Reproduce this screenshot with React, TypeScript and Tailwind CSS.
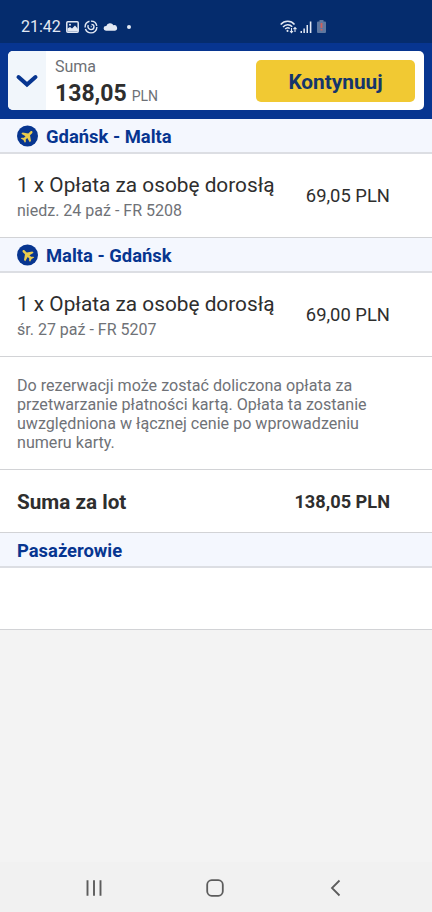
import type { ReactNode } from 'react';

const flights = [
  { route: 'Gdańsk - Malta', details: 'niedz. 24 paź - FR 5208', price: '69,05', back: false },
  { route: 'Malta - Gdańsk', details: 'śr. 27 paź - FR 5207', price: '69,00', back: true },
];

function PlaneIcon({ back }: { back: boolean }) {
  return (
    <svg width="21" height="22" viewBox="0.5 0 21 22" className="shrink-0">
      <circle cx="11" cy="11" r="10.500" fill="#073590" />
      <g transform={`translate(11 11) rotate(${back ? -45 : 45}) scale(0.66)`}>
        <path
          d="M0-10c-1.200 0-1.900 1-1.900 2v4.500L-9 1.500v2.700l7.100-1.800v3.300L-4.500 8v2L0 8.800l4.500 1.200V8L1.900 5.700V2.400L9 4.200V1.500l-7.100-5V-8c0-1-.7-2-1.900-2z"
          fill="#e9cb4c"
        />
      </g>
    </svg>
  );
}

function StatusBar() {
  return (
    <div className="flex h-[43px] items-center bg-[#052c6d] pt-[10px] pl-[21px] text-[#e3e9f4]">
      <span className="w-[45px] text-[16px] leading-none">21:42</span>
      <svg width="13" height="12" viewBox="0 0 13 12">
        <rect x="0.8" y="0.8" width="11.400" height="10.400" rx="1" fill="none" stroke="currentColor" strokeWidth="1.500" />
        <path d="M1.500 10V7.500L4 6l2 1.500L9 4.500l3 3.500v2.500H1.500z" fill="currentColor" />
        <circle cx="4" cy="3.700" r="1" fill="currentColor" />
      </svg>
      <svg width="14" height="14" viewBox="0 0 14 14" className="ml-[5px]" fill="none" stroke="currentColor" strokeWidth="1.400">
        <circle cx="7" cy="7" r="5.900" strokeDasharray="16 1.500 8 1.500 8 2.100" />
        <path d="M4.200 5C3.300 7.500 4.800 9.600 7 9.600s3-1.400 3-2.800-1.200-2.400-2.500-2.400M6.800 6.500h.8" />
      </svg>
      <svg width="15" height="9" viewBox="0 0 14 9" className="ml-[5px]" fill="currentColor">
        <path d="M2.500 8.700a2.400 2.400 0 0 1 0-4.800h.3A4 4 0 0 1 10 3.200a2.800 2.800 0 0 1 1.500 5.500z" />
      </svg>
      <span className="ml-[9px] size-[4px] rounded-full bg-current" />
      <svg width="17" height="14" viewBox="0 0 17 14" className="ml-[149px]" fill="none" stroke="currentColor">
        <path d="M.7 4.500C4.500.3 11 .3 14.500 4.500M3 7c2.600-2.900 6.700-2.900 9.200-.2M5.200 9c1.500-1.500 3.200-1.600 4.600-.5" strokeWidth="1.500" />
        <path d="M7.500 10.800v.1" strokeWidth="2" strokeLinecap="round" />
        <path d="M11.500 8v4.500M10 11l1.500 1.700L13 11M15 12V7.500M13.500 9.200L15 7.500l1.500 1.700" strokeWidth="1.100" />
      </svg>
      <svg width="12" height="12" viewBox="0 0 12 12" className="ml-[3px]" fill="currentColor">
        <path d="M.5 10h1.500v2H.5zM3.400 7.500h1.500V12H3.400zM6.500 4H8v8H6.500zM9.800.5h1.600V12H9.800z" />
      </svg>
      <svg width="9" height="13" viewBox="0 0 9 13" className="ml-[5px]">
        <path d="M2.500 0h4v1.400H8a1 1 0 0 1 1 1V12a1 1 0 0 1-1 1H1a1 1 0 0 1-1-1V2.400a1 1 0 0 1 1-1h1.500z" fill="#5f789f" />
        <path d="M4.500 3v5M4.500 9v1.500" stroke="#d0605c" strokeWidth="1.800" />
      </svg>
    </div>
  );
}

function SectionHeader({ children }: { children: ReactNode }) {
  return (
    <h2 className="flex h-[35px] items-center border-b-2 border-[#dcdee3] bg-[#f4f7fe] px-[17px] text-[18.400px] font-bold text-[#073590]">
      {children}
    </h2>
  );
}

export default function App() {
  return (
    <div className="flex h-[912px] w-[432px] flex-col overflow-hidden bg-[#f3f3f3] font-['Roboto',sans-serif] text-[#2e2e2e]">
      <StatusBar />

      <header className="h-[76px] bg-[#073590] px-[8px] pt-[8px]">
        <div className="flex h-[59px] overflow-hidden rounded-[5px] bg-white">
          <button className="flex w-[38px] items-center justify-center bg-[#f1f6fb]">
            <svg width="24" height="16" viewBox="0 0 24 16" fill="none" stroke="#073590" strokeWidth="4" strokeLinecap="round">
              <path d="M3.500 4l8.500 7.500L20.500 4" />
            </svg>
          </button>
          <div className="flex-1 pt-[6px] pl-[9px]">
            <div className="text-[16px] leading-[19px] text-[#6d7075]">Suma</div>
            <div className="flex items-baseline gap-[5px] pt-[2px] leading-[32px]">
              <span className="text-[23px] font-bold">138,05</span>
              <span className="text-[14px] text-[#6d7075]">PLN</span>
            </div>
          </div>
          <button className="mt-[9px] mr-[9px] h-[42px] w-[159px] rounded-[5px] bg-[#f1c933] pt-[3px] text-[20.800px] font-bold text-[#15356b]">
            Kontynuuj
          </button>
        </div>
      </header>

      <main className="bg-white">
        {flights.map((f) => (
          <section key={f.route}>
            <SectionHeader>
              <PlaneIcon back={f.back} />
              <span className="ml-[8px] pt-[2px]">{f.route}</span>
            </SectionHeader>
            <div className="flex h-[84px] items-center justify-between border-b border-[#d2d3d6] pr-[42px] pl-[17px]">
              <div className="pt-[4px]">
                <div className="text-[20.800px] leading-[26px]">1 x Opłata za osobę dorosłą</div>
                <div className="text-[16px] leading-[25px] text-[#6f7277]">{f.details}</div>
              </div>
              <span className="pt-px text-[18.400px]">{f.price} PLN</span>
            </div>
          </section>
        ))}

        <p className="h-[113px] border-b border-[#d2d3d6] pt-[19px] pl-[17px] text-[16.100px] leading-[19px] text-[#6f7277]">
          Do rezerwacji może zostać doliczona opłata za
          <br />
          przetwarzanie płatności kartą. Opłata ta zostanie
          <br />
          uwzględniona w łącznej cenie po wprowadzeniu
          <br />
          numeru karty.
        </p>

        <div className="flex h-[63px] items-center justify-between border-b border-[#d2d3d6] pt-px pr-[42px] pl-[17px] font-bold">
          <span className="pt-[2px] text-[20.700px]">Suma za lot</span>
          <span className="text-[18.200px]">138,05 PLN</span>
        </div>

        <SectionHeader>
          <span className="pt-[2px]">Pasażerowie</span>
        </SectionHeader>
        <div className="h-[62px] border-b border-[#d2d3d6]" />
      </main>

      <nav className="mt-auto flex h-[50px] items-center bg-[#f1f1f1] pt-[2px] pl-[85px] text-[#5c5c5c]">
        <svg width="18" height="18" viewBox="0 0 18 18" fill="none" stroke="currentColor" strokeWidth="1.900">
          <path d="M2.500 1.200v15.600M9 1.200v15.600M15.500 1.200v15.600" />
        </svg>
        <svg width="18" height="18" viewBox="0 0 18 18" className="ml-[103px]" fill="none" stroke="currentColor" strokeWidth="1.800">
          <rect x="1.200" y="1.200" width="15.600" height="15.600" rx="4.500" />
        </svg>
        <svg width="12" height="18" viewBox="0 0 12 18" className="ml-[105px]" fill="none" stroke="currentColor" strokeWidth="1.800">
          <path d="M10.500 1.500L3 9l7.500 7.500" />
        </svg>
      </nav>
    </div>
  );
}
